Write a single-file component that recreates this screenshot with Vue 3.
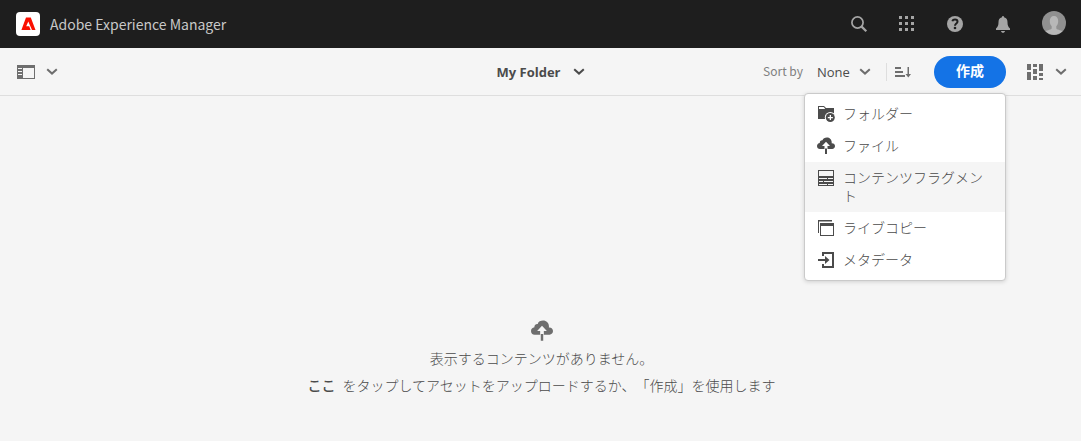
<script setup>
import { ref } from 'vue'

const sort = ref('None')
const items = [
  { id: 'folder', label: 'フォルダー' },
  { id: 'upload', label: 'ファイル' },
  { id: 'fragment', label: 'コンテンツフラグメント', active: true },
  { id: 'copy', label: 'ライブコピー' },
  { id: 'meta', label: 'メタデータ' },
]
const chevron = 'M1.2 1.2 6 5.6l4.8-4.4'
const cloud =
  'M14.6 6.2c.1-.3.1-.6.1-.9C14.7 2.600 12.600.5 9.900.5 7.800.5 6 1.400 5.500 3.200 3.800 3 2.600 4.200 2.800 5.900 1.200 6.100 0 7.300 0 8.900c0 1.600 1.200 3.100 2.900 3.100H7.500V9H5L9 4.800 13 9h-2.500v3h4.700c1.600 0 2.800-1.300 2.800-2.900 0-1.700-1.400-3.100-3.400-2.900zM8 11.500h2V17H8z'
</script>

<template>
  <div class="app">
    <header class="shell">
      <a class="brand" href="#">
        <svg class="logo" width="24" height="24" viewBox="0 0 24 24" aria-hidden="true">
          <rect width="24" height="24" rx="4" fill="#fff" />
          <path fill="#fa0f00" d="M10 5.500h4.800L19.500 18H16L12.300 9.500 10.200 14.200h3L14.600 18H5.400z" />
        </svg>
        <span>Adobe Experience Manager</span>
      </a>
      <nav class="tools">
        <button aria-label="Search">
          <svg width="18" height="18" viewBox="0 0 18 18" fill="none" stroke="currentColor">
            <circle cx="7.500" cy="7.500" r="5.600" stroke-width="1.700" />
            <path d="m11.600 11.600 4.700 4.700" stroke-width="2.200" />
          </svg>
        </button>
        <button aria-label="Solutions">
          <svg width="18" height="18" viewBox="0 0 18 18" fill="currentColor">
            <template v-for="y in 3" :key="y">
              <rect v-for="x in 3" :key="x" :x="x * 6 - 5" :y="y * 6 - 5" width="3" height="3" />
            </template>
          </svg>
        </button>
        <button aria-label="Help">
          <svg width="18" height="18" viewBox="0 0 18 18">
            <circle cx="9" cy="9" r="8" fill="currentColor" />
            <path d="M6.300 6.300C6.700 5 7.700 4.600 9 4.600c1.500 0 2.500.8 2.500 2.100 0 1.900-2.500 1.900-2.500 4" fill="none" stroke="#1e1e1e" stroke-width="2" />
            <circle cx="9" cy="13" r="1.300" fill="#1e1e1e" />
          </svg>
        </button>
        <button aria-label="Notifications">
          <svg width="18" height="18" viewBox="0 0 18 18" fill="currentColor">
            <path d="M8 2.200C8 .700 10 .700 10 2.200c2.600.6 3.500 2.500 3.500 5 0 3 .6 4.400 2.500 6.200V15H2v-1.600c1.900-1.800 2.500-3.200 2.500-6.200 0-2.500.9-4.400 3.500-5zM7 16h4c-.3 2.400-3.700 2.400-4 0z" />
          </svg>
        </button>
        <button class="user" aria-label="User">
          <svg width="24" height="24" viewBox="0 0 24 24">
            <circle cx="12" cy="11" r="12" fill="#909090" />
            <path fill="#b8b8b8" d="M12 4c2.700 0 4.200 2 4.200 5 0 2.400-.8 4.200-1.900 5.300v1.900c0 1.600 4.500 1.700 6.100 3.000A12 12 0 0 1 3.600 19.200c1.600-1.300 6.100-1.400 6.100-3v-1.900C8.600 13.200 7.800 11.400 7.800 9c0-3 1.500-5 4.200-5z" />
          </svg>
        </button>
      </nav>
    </header>

    <div class="bar">
      <button class="rail" aria-label="Toggle rail">
        <svg width="18" height="14" viewBox="0 0 18 14">
          <path fill="currentColor" fill-rule="evenodd" d="M0 0h18v14H0zM6 3v10h11V3zM1 3v1h4V3zM1 6v1h4V6zM1 9v1h4V9z" />
        </svg>
        <svg class="chev" viewBox="0 0 12 7"><path :d="chevron" /></svg>
      </button>

      <button class="title">
        <span>My Folder</span>
        <svg class="chev" viewBox="0 0 12 7"><path :d="chevron" /></svg>
      </button>

      <div class="right">
        <label class="sortlabel" for="sort">Sort by</label>
        <div class="pick">
          <select id="sort" v-model="sort">
            <option>None</option>
            <option>Name</option>
          </select>
          <svg class="chev" viewBox="0 0 12 7"><path :d="chevron" /></svg>
        </div>
        <button class="order" aria-label="Sort direction">
          <svg width="16" height="12" viewBox="0 0 16 12" fill="currentColor">
            <path d="M0 1h6v2H0zM0 5h8v2H0zM0 9h10v2H0zM12.500 1H14v7h2l-2.700 3.500L10.500 8h2z" />
          </svg>
        </button>
        <div class="create">
          <button class="cta" aria-haspopup="menu" aria-expanded="true">作成</button>
          <div class="menu" role="menu">
            <button v-for="i in items" :key="i.id" role="menuitem" :class="{ active: i.active }">
              <svg width="18" height="18" viewBox="0 0 18 18" fill="currentColor" aria-hidden="true">
                <template v-if="i.id === 'folder'">
                  <path d="M1 2V1h6l2 2h8v11H1z" />
                  <path d="M2 2h4.600l1.500 1.500L7.500 4H2z" fill="#fff" />
                  <circle cx="13.300" cy="12.500" r="5.500" fill="#fff" />
                  <circle cx="13.300" cy="12.500" r="4.500" />
                  <path d="M12.700 10h1.300v1.900h1.900v1.300H14v1.900h-1.300v-1.900h-1.900v-1.300h1.900z" fill="#fff" />
                </template>
                <path v-else-if="i.id === 'upload'" :d="cloud" />
                <path v-else-if="i.id === 'fragment'" fill-rule="evenodd" d="M1 1h16v16H1zM2 2v5h14V2zM2 9v1h8V9zM11 9v1h5V9zM2 12v1h4v-1zM7 12v1h9v-1zM2 15v1h8v-1zM11 15v1h5v-1z" />
                <path v-else-if="i.id === 'copy'" fill-rule="evenodd" d="M1 1h14v1.500H2V14H1zM3 4h14v13H3zM4 7v9h12V7z" />
                <path v-else d="M5 1h12v16H5v-4h2v2h8V3H7v2H5zM1 8h7V5l4.500 4L8 13v-3H1z" />
              </svg>
              <span>{{ i.label }}</span>
            </button>
          </div>
        </div>
        <button class="view" aria-label="Card view">
          <svg width="16" height="16" viewBox="0 0 16 16" fill="currentColor">
            <path d="M0 0h4v6H0zM0 8h4v8H0zM6 0h4v3H6zM6 5h4v5H6zM6 12h4v4H6zM12 0h4v7h-4zM12 9h4v3h-4zM12 14h4v2h-4z" />
          </svg>
          <svg class="chev" viewBox="0 0 12 7"><path :d="chevron" /></svg>
        </button>
      </div>
    </div>

    <main class="empty">
      <svg width="22" height="22" viewBox="0 0 18 18" fill="#6e6e6e" aria-hidden="true"><path :d="cloud" /></svg>
      <p>表示するコンテンツがありません。</p>
      <p><a href="#">ここ</a>をタップしてアセットをアップロードするか、「作成」を使用します</p>
    </main>
  </div>
</template>

<style>
body {
  background: #f5f5f5;
}
</style>

<style scoped>
.app {
  font-family: "Noto Sans CJK JP", sans-serif;
  font-size: 14px;
  line-height: 18px;
  color: #4b4b4b;
  text-spacing-trim: space-all;
}
button {
  border: 0;
  background: none;
  padding: 0;
  font: inherit;
  color: inherit;
  display: flex;
  align-items: center;
}
a {
  color: inherit;
  text-decoration: none;
}
svg {
  display: block;
  flex: none;
}
.shell {
  height: 48px;
  background: #1e1e1e;
  display: flex;
  align-items: center;
  justify-content: space-between;
  padding: 0 15px 0 16px;
}
.brand {
  display: flex;
  align-items: center;
  gap: 10px;
  color: #c8c8c8;
}
.tools {
  display: flex;
  align-items: center;
  gap: 30px;
  color: #a5a5a5;
}
.user svg {
  overflow: visible;
}
.bar {
  box-sizing: border-box;
  height: 48px;
  border-bottom: 1px solid #dedede;
  display: grid;
  grid-template-columns: 1fr auto 1fr;
  align-items: center;
  padding: 0 14px;
  color: #6e6e6e;
}
.chev {
  width: 12px;
  height: 7px;
  fill: none;
  stroke: currentColor;
  stroke-width: 2;
}
.rail {
  gap: 11px;
  justify-self: start;
  padding-left: 3px;
}
.title {
  gap: 12px;
  color: #4b4b4b;
  font-family: "Open Sans", sans-serif;
  font-size: 13px;
  font-weight: 700;
}
.right {
  display: flex;
  align-items: center;
  justify-self: end;
}
.sortlabel {
  font-size: 12px;
  color: #808080;
  margin-right: 14px;
  padding-bottom: 2px;
}
.pick {
  display: grid;
  align-items: center;
  width: 54px;
  margin-right: 15px;
}
.pick > * {
  grid-area: 1 / 1;
}
.pick .chev {
  justify-self: end;
  pointer-events: none;
}
select {
  appearance: none;
  border: 0;
  padding: 0;
  width: 100%;
  background: none;
  color: #4b4b4b;
  font-family: "Open Sans", sans-serif;
  font-size: 13px;
}
.order {
  border-left: 1px solid #dedede;
  height: 18px;
  padding-left: 8px;
}
.create {
  position: relative;
  margin: 0 21px 0 23px;
}
.cta {
  box-sizing: border-box;
  height: 32px;
  padding: 0 22px 3px;
  border-radius: 16px;
  background: #1473e6;
  color: #fff;
  font-weight: 700;
}
.menu {
  position: absolute;
  top: 37px;
  right: 0;
  box-sizing: border-box;
  width: 202px;
  padding: 4px 0;
  background: #fff;
  border: 1px solid #cacaca;
  border-radius: 4px;
  box-shadow: 0 1px 4px rgba(0, 0, 0, 0.15);
  color: #4b4b4b;
}
.menu button {
  width: 100%;
  padding: 6px 12px 8px;
  gap: 8px;
  align-items: flex-start;
  text-align: left;
  font-weight: 300;
}
.menu svg {
  margin: 1px 0 -1px;
}
.menu span {
  flex: 1;
}
.menu .active {
  background: #f5f5f5;
}
.view {
  gap: 12px;
}
.empty {
  display: flex;
  flex-direction: column;
  align-items: center;
  padding: 224px 0 0 2px;
  font-weight: 300;
}
.empty p {
  margin: 9px 0 0;
}
.empty svg + p {
  margin-top: 7px;
}
.empty a {
  font-weight: 500;
  margin-right: 7px;
}
</style>
